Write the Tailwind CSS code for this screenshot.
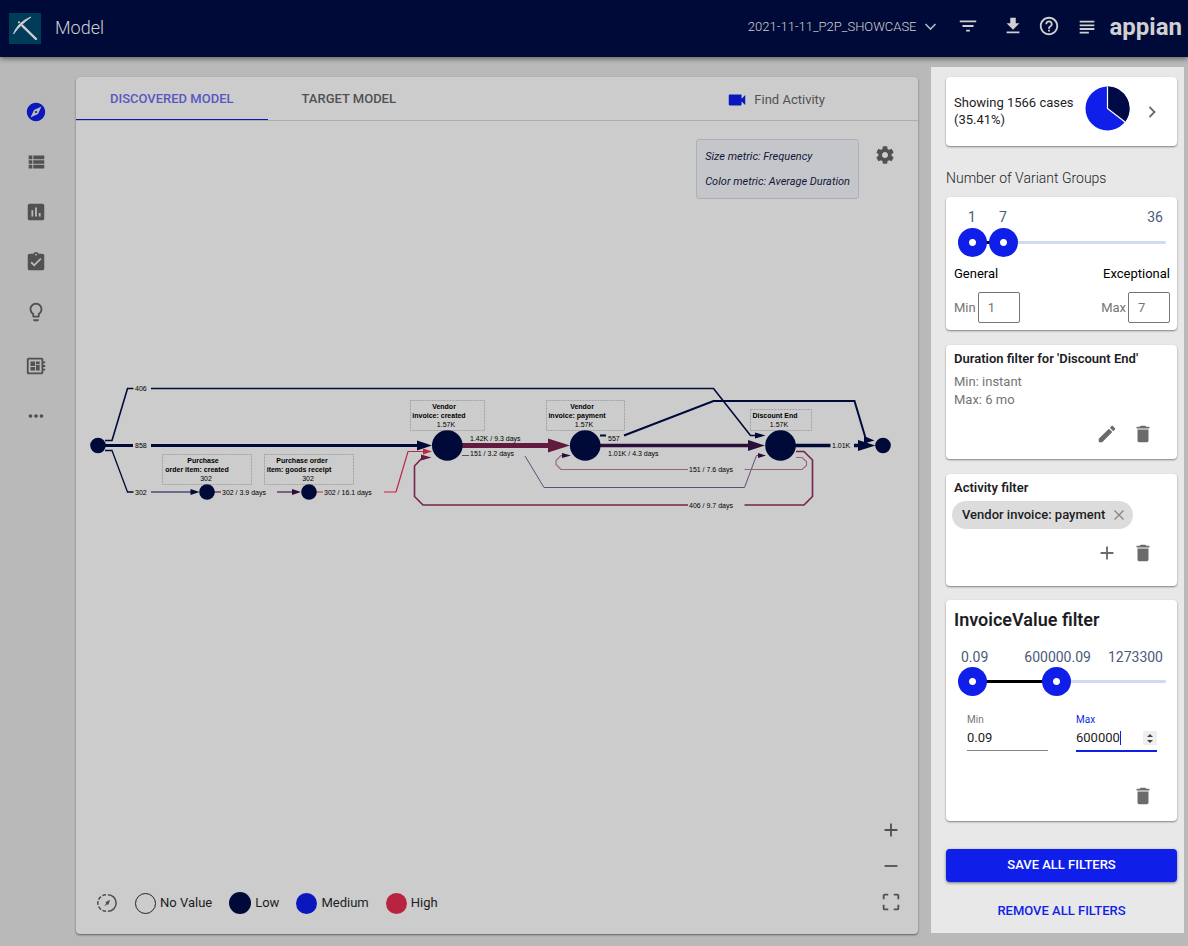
<!DOCTYPE html>
<html lang="en">
<head>
<meta charset="utf-8">
<meta name="viewport" content="width=device-width, initial-scale=1">
<title>Model</title>
<script src="https://cdn.jsdelivr.net/npm/@tailwindcss/browser@4"></script>
</head>
<body class="flex min-h-screen flex-col bg-[#b9b9b9] font-[Roboto,sans-serif] text-[13px] leading-4 text-[#1d1d1f]">

<svg class="hidden" aria-hidden="true">
  <symbol id="trash" viewBox="0 0 24 24"><path fill="currentColor" d="M6 19c0 1.1.9 2 2 2h8c1.1 0 2-.9 2-2V7H6v12zM19 4h-3.500l-1-1h-5l-1 1H5v2h14V4z"/></symbol>
  <symbol id="plus" viewBox="0 0 24 24"><path fill="currentColor" d="M19 13h-6v6h-2v-6H5v-2h6V5h2v6h6v2z"/></symbol>
</svg>

<header class="relative z-10 flex h-[57px] shrink-0 items-center bg-[#000a38] pr-[6px] pl-[9px] text-[#d0d0d3] shadow-[0_2px_5px_rgba(0,0,0,0.45)]">
  <svg class="h-[31px] w-8" viewBox="0 0 32 31" aria-hidden="true">
    <rect width="32" height="31" fill="#003c58"/>
    <path d="M4.500 21C7 13.500 13 7.500 22 4c-6 4.500-12 9.500-17.500 17z" fill="#d0d0d3" stroke="#d0d0d3" stroke-width=".8" stroke-linejoin="round"/>
    <path d="M13.500 12.800 27 26" stroke="#d0d0d3" stroke-width="2.400" stroke-linecap="round"/>
    <circle cx="10" cy="9.300" r="1.100" fill="#d0d0d3"/>
  </svg>
  <h1 class="ml-[14px] pb-[2px] text-lg font-light">Model</h1>
  <button class="ml-auto flex items-center gap-[7px] pb-1 font-light"><span>2021-11-11_P2P_SHOWCASE</span>
    <svg class="h-[13px] w-[13px]" viewBox="0 0 13 13" fill="none" stroke="#a9bccb" stroke-width="1.600" aria-hidden="true"><path d="M1.500 4 6.500 9l5-5"/></svg>
  </button>
  <button class="ml-5 pb-[6px]" aria-label="Filter"><svg class="h-[22px] w-[22px]" viewBox="0 0 24 24" fill="currentColor"><path d="M10 18h4v-2h-4v2zM3 6v2h18V6H3zm3 7h12v-2H6v2z"/></svg></button>
  <button class="ml-[23px] pb-[6px]" aria-label="Download"><svg class="h-[22px] w-[22px]" viewBox="0 0 24 24" fill="currentColor"><path d="M19 9h-4V3H9v6H5l7 7 7-7zM5 18v2h14v-2H5z"/></svg></button>
  <button class="ml-[14px] pb-[6px]" aria-label="Help"><svg class="h-[22px] w-[22px]" viewBox="0 0 24 24" fill="currentColor"><path d="M11 18h2v-2h-2v2zm1-16C6.480 2 2 6.480 2 12s4.480 10 10 10 10-4.480 10-10S17.520 2 12 2zm0 18c-4.410 0-8-3.590-8-8s3.590-8 8-8 8 3.590 8 8-3.590 8-8 8zm0-14c-2.210 0-4 1.790-4 4h2c0-1.100.900-2 2-2s2 .900 2 2c0 2-3 1.750-3 5h2c0-2.250 3-2.500 3-5 0-2.210-1.790-4-4-4z"/></svg></button>
  <button class="ml-4 pb-1" aria-label="Notes"><svg class="h-[22px] w-[22px]" viewBox="0 0 24 24" fill="currentColor"><path d="M4 5.200h16v2H4zM4 9.200h16v2H4zM4 13.200h16v2H4zM4 17.200h10v2H4z"/></svg></button>
  <span class="ml-3 pb-1 text-2xl leading-8 font-bold">appian</span>
</header>

<div class="flex grow">
  <nav class="flex w-[76px] shrink-0 flex-col items-center pt-11 pr-1 text-[#515151]" aria-label="Main">
    <div class="flex flex-col gap-7">
      <a href="#" aria-label="Explore" class="text-[#0a17bd]"><svg class="h-[22px] w-[22px]" viewBox="0 0 24 24" fill="currentColor"><path d="M12 10.900c-.610 0-1.100.490-1.100 1.100s.490 1.100 1.100 1.100c.610 0 1.100-.490 1.100-1.100s-.490-1.100-1.100-1.100zM12 2C6.480 2 2 6.480 2 12s4.480 10 10 10 10-4.480 10-10S17.520 2 12 2zm2.190 12.190L6 18l3.810-8.190L18 6l-3.810 8.190z"/></svg></a>
      <a href="#" aria-label="Details"><svg class="h-[22px] w-[22px]" viewBox="0 0 24 24" fill="currentColor"><path d="M4 14h4v-4H4v4zm0 5h4v-4H4v4zM4 9h4V5H4v4zm5 5h12v-4H9v4zm0 5h12v-4H9v4zM9 5v4h12V5H9z"/></svg></a>
      <a href="#" aria-label="Charts"><svg class="h-[22px] w-[22px]" viewBox="0 0 24 24" fill="currentColor"><path d="M19 3H5c-1.100 0-2 .900-2 2v14c0 1.100.900 2 2 2h14c1.100 0 2-.900 2-2V5c0-1.100-.900-2-2-2zM9 17H7v-7h2v7zm4 0h-2V7h2v10zm4 0h-2v-4h2v4z"/></svg></a>
      <a href="#" aria-label="Conformance"><svg class="h-[22px] w-[22px]" viewBox="0 0 24 24" fill="currentColor"><path d="M19 3h-4.180C14.400 1.840 13.300 1 12 1c-1.300 0-2.400.840-2.820 2H5c-1.100 0-2 .900-2 2v14c0 1.100.900 2 2 2h14c1.100 0 2-.900 2-2V5c0-1.100-.900-2-2-2zm-7 0c.550 0 1 .450 1 1s-.450 1-1 1-1-.450-1-1 .450-1 1-1zm-2 14l-4-4 1.410-1.410L10 14.170l6.590-6.590L18 9l-8 8z"/></svg></a>
      <a href="#" aria-label="Insights"><svg class="h-[22px] w-[22px]" viewBox="0 0 24 24" fill="currentColor"><path d="M9 21c0 .550.450 1 1 1h4c.550 0 1-.450 1-1v-1H9v1zm3-19C8.140 2 5 5.140 5 9c0 2.380 1.190 4.470 3 5.740V17c0 .550.450 1 1 1h6c.550 0 1-.450 1-1v-2.260c1.810-1.270 3-3.360 3-5.740 0-3.860-3.140-7-7-7zm2.850 11.100l-.850.600V16h-4v-2.300l-.850-.600A4.997 4.997 0 0 1 7 9c0-2.760 2.240-5 5-5s5 2.240 5 5c0 1.630-.800 3.160-2.150 4.100z"/></svg></a>
    </div>
    <div class="mt-8 flex flex-col gap-7">
      <a href="#" aria-label="Dashboard"><svg class="h-[22px] w-[22px]" viewBox="0 0 24 24" fill="currentColor"><path d="M22 9V7h-2V5c0-1.100-.900-2-2-2H4c-1.100 0-2 .900-2 2v14c0 1.100.900 2 2 2h14c1.100 0 2-.900 2-2v-2h2v-2h-2v-2h2v-2h-2V9h2zm-4 10H4V5h14v14zM6 13h5v4H6zm6-6h4v3h-4zM6 7h5v5H6zm6 4h4v6h-4z"/></svg></a>
      <a href="#" aria-label="More"><svg class="h-[22px] w-[22px]" viewBox="0 0 24 24" fill="currentColor"><path d="M6 10c-1.100 0-2 .900-2 2s.900 2 2 2 2-.900 2-2-.900-2-2-2zm12 0c-1.100 0-2 .900-2 2s.900 2 2 2 2-.900 2-2-.900-2-2-2zm-6 0c-1.100 0-2 .900-2 2s.900 2 2 2 2-.900 2-2-.900-2-2-2z"/></svg></a>
    </div>
  </nav>

  <main class="mt-5 mr-[13px] mb-3 flex min-w-0 grow flex-col rounded bg-[#ccc] shadow-[0_1px_2px_rgba(0,0,0,0.5)]">
    <div class="flex h-11 shrink-0 border-b border-[#adadad] text-[#515151]">
      <button class="border-b border-[#0a17bd] px-[34px] pt-px font-medium text-[#5957c1]">DISCOVERED MODEL</button>
      <button class="border-b border-transparent px-[34px] pt-px font-medium">TARGET MODEL</button>
      <button class="mr-[93px] ml-auto flex items-center gap-[6px] pt-[2px]">
        <svg class="h-[22px] w-[22px] text-[#0a17bd]" viewBox="0 0 24 24" fill="currentColor" aria-hidden="true"><path d="M17 10.500V7c0-.550-.450-1-1-1H4c-.550 0-1 .450-1 1v10c0 .550.450 1 1 1h12c.550 0 1-.450 1-1v-3.500l4 4v-11l-4 4z"/></svg>Find Activity
      </button>
    </div>
    <div class="flex items-start justify-end gap-[15px] pt-[18px] pr-[22px]">
      <div class="rounded-[3px] border border-[#adafb9] bg-[#c5c6c9] px-2 py-1 text-[11px] leading-[25px] text-[#10163b] italic">
        <p>Size metric: Frequency</p><p>Color metric: Average Duration</p>
      </div>
      <button class="mt-[5px] text-[#515151]" aria-label="Settings"><svg class="h-[22px] w-[22px]" viewBox="0 0 24 24" fill="currentColor"><path d="M19.140 12.940c.040-.300.060-.610.060-.940 0-.320-.020-.640-.070-.940l2.030-1.580c.180-.140.230-.410.120-.610l-1.920-3.320c-.120-.220-.370-.290-.590-.220l-2.390.960c-.500-.380-1.030-.700-1.620-.940l-.360-2.540c-.040-.240-.240-.410-.480-.410h-3.840c-.240 0-.430.170-.470.410l-.360 2.540c-.590.240-1.130.570-1.620.940l-2.390-.960c-.220-.080-.470 0-.590.220L2.740 8.870c-.120.210-.080.470.120.610l2.030 1.580c-.050.300-.090.630-.090.940s.020.640.070.940l-2.030 1.580c-.180.140-.230.410-.120.610l1.920 3.320c.120.220.370.290.590.220l2.390-.960c.500.380 1.030.700 1.620.940l.360 2.540c.050.240.240.410.480.410h3.840c.240 0 .440-.170.470-.410l.360-2.540c.590-.240 1.130-.560 1.620-.940l2.390.960c.220.080.470 0 .590-.220l1.920-3.320c.120-.220.070-.470-.120-.610l-2.010-1.580zM12 15.300c-1.820 0-3.300-1.480-3.300-3.300s1.480-3.300 3.300-3.300 3.300 1.480 3.300 3.300-1.480 3.300-3.300 3.300z"/></svg></button>
    </div>

    <svg class="mt-[171px] w-full font-['Liberation_Sans',Arial,sans-serif] text-[7px]" viewBox="76 370 842 150" role="img" aria-label="Process model">
      <g fill="none" stroke="#a2a2a2" stroke-dasharray="2 1">
        <path d="M162.500 454.500h89v30h-89zM264.500 454.500h89v30h-89zM410.500 400.500h74v30h-74zM546.500 400.500h78v30h-78zM750.500 409.500h61v21h-61z"/>
      </g>
      <g fill="none" stroke="#000a38">
        <path stroke-width="1.600" d="M105 440.500h7l15.500-52h6M151 388.500h562.500l37 47h6"/>
        <path stroke-width="3.200" d="M105 445.500h28M151 445.500h267"/>
        <path stroke-width="1.300" d="M105 450.500h7l15.500 41.500h6"/>
        <path stroke-width="1.300" stroke="#4b4d78" d="M151 492h40"/>
        <path stroke-width="2" d="M600 435.500h6M624 435.500l89.500-34.500h141l11.500 38.500"/>
        <path stroke-width="3.600" d="M795 445.500h35.500M854 445.500h6"/>
      </g>
      <g fill="none">
        <path stroke="#733354" stroke-width="1.400" d="M214 492h7"/>
        <path stroke="#59345c" stroke-width="1.400" d="M277 492h17"/>
        <path stroke="#cf5a6e" stroke-width="1.600" d="M316 492h7M384 492h12"/>
        <path stroke="#b82a45" stroke-width="1.200" d="M396 492l12-40.500h16"/>
        <path stroke="#621a3e" stroke-width="5" d="M462 445.500h88"/>
        <path stroke="#2b0e3a" stroke-width="3.600" d="M600 445.500h150"/>
        <path stroke="#5d4f78" stroke-width="1" d="M462 455.500h7M525 456l19 31.500h200.500l12-32h3"/>
        <path stroke="#98637f" stroke-width="1.100" d="M796 457.500h6l4.500 4v4l-4.500 4h-57.500M688 469.500H561l-5-5v-4l5-5h3"/>
        <path stroke="#74244a" stroke-width="1.600" d="M796 451.500h8l8.500 8.500v36.500l-8.500 8.500h-59.500M688 505H423l-8.500-8.500V466l8-8.500"/>
      </g>
      <g fill="#000a38">
        <path d="M417 440.500l15 5-15 5zM190.500 489l9 3-9 3zM755 432.500l10.500 3-10.500 3zM864 436l10.500 4.500-10.500 3zM858 440l17.500 5.500-17.500 5.500z"/>
        <path fill="#2b0e3a" d="M292 489l9 3-9 3zM748 440l17 5.500-17 5.500zM758 453l8 2.500-8 2.500zM562 453l9 2.500-9 2.500z"/>
        <path fill="#b82a45" d="M423 448.500l9 3-9 3z"/>
        <path fill="#621a3e" d="M548 438.500l22 7-22 7zM421 454.500l10.500 3-10.500 3z"/>
        <circle cx="98" cy="445.500" r="7.800"/><circle cx="207" cy="492" r="7.800"/><circle cx="309" cy="492" r="7.800"/>
        <circle cx="447.300" cy="445.500" r="15.300"/><circle cx="585.200" cy="445.500" r="15.300"/><circle cx="780.500" cy="445.500" r="15.300"/><circle cx="883" cy="445.500" r="7.800"/>
      </g>
      <g fill="#000">
        <text x="135" y="391">406</text><text x="135" y="448">858</text><text x="135" y="495">302</text>
        <text x="222" y="495">302 / 3.9 days</text><text x="324" y="495">302 / 16.1 days</text>
        <text x="470" y="441">1.42K / 9.3 days</text><text x="470" y="456">151 / 3.2 days</text>
        <text x="608" y="441">557</text><text x="608" y="456">1.01K / 4.3 days</text>
        <text x="689" y="472">151 / 7.6 days</text><text x="689" y="508">406 / 9.7 days</text><text x="832" y="448">1.01K</text>
      </g>
      <g fill="#000" text-anchor="middle">
        <g class="font-bold">
          <text x="203" y="463">Purchase</text><text x="197" y="472">order item: created</text>
          <text x="302" y="463">Purchase order</text><text x="299" y="472">item: goods receipt</text>
          <text x="444" y="409">Vendor</text><text x="439" y="418">invoice: created</text>
          <text x="582" y="409">Vendor</text><text x="577" y="418">invoice: payment</text>
          <text x="775" y="418">Discount End</text>
        </g>
        <text x="206" y="481">302</text><text x="308" y="481">302</text>
        <text x="446" y="427">1.57K</text><text x="584" y="427">1.57K</text><text x="779" y="427">1.57K</text>
      </g>
    </svg>

    <div class="mt-auto flex items-end justify-between pr-4 pb-[21px] pl-5">
      <div class="flex h-5 items-center gap-[17px]">
        <button class="text-[#515151]" aria-label="Animate"><svg class="h-[22px] w-[22px]" viewBox="0 0 24 24" fill="none" stroke="currentColor" stroke-width="1.700"><path d="M13 3a9 9 0 0 1 0 18"/><path d="M11 3a9 9 0 0 0 0 18" stroke-dasharray="4.200 1.800"/><path d="M15.500 8.500l-2 5.500-1.500-.5-3 2 2-3-.5-1.500z" fill="currentColor" stroke="none"/></svg></button>
        <span class="flex items-center gap-1"><i class="h-[21px] w-[21px] rounded-full border border-[#222]"></i>No Value</span>
        <span class="flex items-center gap-1"><i class="h-[22px] w-[22px] rounded-full bg-[#000a38]"></i>Low</span>
        <span class="flex items-center gap-1"><i class="h-[21px] w-[21px] rounded-full bg-[#0a17bd]"></i>Medium</span>
        <span class="flex items-center gap-1"><i class="h-[21px] w-[21px] rounded-full bg-[#b82340]"></i>High</span>
      </div>
      <div class="flex flex-col gap-[14px] text-[#515151]">
        <button aria-label="Zoom in"><svg class="h-[22px] w-[22px]"><use href="#plus"/></svg></button>
        <button aria-label="Zoom out"><svg class="h-[22px] w-[22px]" viewBox="0 0 24 24"><path fill="currentColor" d="M5 11h14v2H5z"/></svg></button>
        <button aria-label="Fit to screen"><svg class="h-[22px] w-[22px]" viewBox="0 0 24 24" fill="none" stroke="currentColor" stroke-width="2"><path d="M4 9V5a1 1 0 0 1 1-1h4M15 4h4a1 1 0 0 1 1 1v4M20 15v4a1 1 0 0 1-1 1h-4M9 20H5a1 1 0 0 1-1-1v-4"/></svg></button>
      </div>
    </div>
  </main>

  <aside class="mt-[10px] mr-1 mb-[13px] flex w-[253px] shrink-0 flex-col bg-[#e8e8e8] pt-[10px] pr-[7px] pl-[15px]">
    <section class="flex h-[69px] items-center rounded bg-white pr-4 pl-2 shadow-[0_1px_2px_rgba(0,0,0,0.45)]">
      <p class="w-[131px] pb-[2px] leading-[17px]">Showing 1566 cases (35.41%)</p>
      <svg class="mb-[6px] h-[45px] w-[45px]" viewBox="-22.500 -22.500 45 45" aria-hidden="true"><circle r="22" fill="#0f1fe9"/><path d="M0 0V-22A22 22 0 0 1 17.500 13.400z" fill="#000a45"/><path d="M0-22V0L17.500 13.400" fill="none" stroke="#fff" stroke-width="1.200"/></svg>
      <button class="ml-auto text-[#6b6b6b]" aria-label="Show details"><svg class="h-[18px] w-[18px]" viewBox="0 0 18 18" fill="none" stroke="currentColor" stroke-width="1.800"><path d="M6.500 4 11.500 9l-5 5"/></svg></button>
    </section>

    <h2 class="mt-6 mb-[11px] text-sm leading-4 font-light">Number of Variant Groups</h2>
    <section class="h-[133px] rounded bg-white pt-3 pr-[7px] pl-2 shadow-[0_1px_2px_rgba(0,0,0,0.45)]">
      <div class="flex pr-[7px] pl-[14px] text-sm leading-4 text-[#4b5a7a]"><span>1</span><span class="ml-[23px]">7</span><span class="ml-auto">36</span></div>
      <div class="relative mr-1 ml-1 flex h-[35px] items-center">
        <div class="flex h-[3px] w-full rounded-sm bg-[#d0dbf0] pl-[14px]"><div class="bg-black" style="width:17.1%"></div></div>
        <input type="range" aria-label="Minimum variant groups" min="1" max="36" value="1" class="pointer-events-none absolute inset-0 w-full appearance-none bg-transparent [&::-webkit-slider-thumb]:pointer-events-auto [&::-webkit-slider-thumb]:h-[29px] [&::-webkit-slider-thumb]:w-[29px] [&::-webkit-slider-thumb]:appearance-none [&::-webkit-slider-thumb]:rounded-full [&::-webkit-slider-thumb]:bg-[radial-gradient(circle,#fff_3px,#0f1fe9_4px)]">
        <input type="range" aria-label="Maximum variant groups" min="1" max="36" value="7" class="pointer-events-none absolute inset-0 w-full appearance-none bg-transparent [&::-webkit-slider-thumb]:pointer-events-auto [&::-webkit-slider-thumb]:h-[29px] [&::-webkit-slider-thumb]:w-[29px] [&::-webkit-slider-thumb]:appearance-none [&::-webkit-slider-thumb]:rounded-full [&::-webkit-slider-thumb]:bg-[radial-gradient(circle,#fff_3px,#0f1fe9_4px)]">
      </div>
      <div class="mt-[6px] flex justify-between text-black"><span>General</span><span>Exceptional</span></div>
      <div class="mt-[10px] flex justify-between text-[#757575]">
        <label class="flex items-center gap-[2px]">Min <input type="text" inputmode="numeric" value="1" class="h-[31px] w-[42px] rounded-xs border border-[#757575] px-[9px]"></label>
        <label class="flex items-center gap-[2px]">Max <input type="text" inputmode="numeric" value="7" class="h-[31px] w-[42px] rounded-xs border border-[#757575] px-[9px]"></label>
      </div>
    </section>

    <section class="mt-[15px] flex h-[114px] flex-col rounded bg-white px-2 pt-[6px] shadow-[0_1px_2px_rgba(0,0,0,0.45)]">
      <h3 class="font-semibold">Duration filter for 'Discount End'</h3>
      <p class="mt-[6px] leading-[18px] text-[#757575]">Min: instant<br>Max: 6 mo</p>
      <div class="mt-auto mr-[15px] mb-[14px] flex justify-end gap-[14px] text-[#6b6b6b]">
        <button aria-label="Edit duration filter"><svg class="h-[22px] w-[22px]" viewBox="0 0 24 24" fill="currentColor"><path d="M3 17.250V21h3.750L17.810 9.940l-3.750-3.750L3 17.250zM20.710 7.040c.390-.390.390-1.020 0-1.410l-2.340-2.340c-.390-.390-1.020-.390-1.410 0l-1.830 1.830 3.750 3.750 1.830-1.830z"/></svg></button>
        <button aria-label="Delete duration filter"><svg class="h-[22px] w-[22px]"><use href="#trash"/></svg></button>
      </div>
    </section>

    <section class="mt-[15px] flex h-[112px] flex-col rounded bg-white px-[6px] pt-[6px] shadow-[0_1px_2px_rgba(0,0,0,0.45)]">
      <h3 class="ml-[2px] font-semibold">Activity filter</h3>
      <div class="mt-[5px] flex h-7 items-center gap-2 self-start rounded-full bg-[#dcdcdc] pr-2 pl-[10px] font-medium">Vendor invoice: payment
        <button class="text-[#858585]" aria-label="Remove Vendor invoice: payment"><svg class="h-3 w-3" viewBox="0 0 12 12" fill="none" stroke="currentColor" stroke-width="1.300"><path d="M1.500 1.500l9 9M10.500 1.500l-9 9"/></svg></button>
      </div>
      <div class="mt-[13px] mr-[17px] flex justify-end gap-[14px] text-[#6b6b6b]">
        <button aria-label="Add activity"><svg class="h-[22px] w-[22px]"><use href="#plus"/></svg></button>
        <button aria-label="Delete activity filter"><svg class="h-[22px] w-[22px]"><use href="#trash"/></svg></button>
      </div>
    </section>

    <section class="mt-[14px] flex h-[221px] flex-col rounded bg-white px-2 pt-2 shadow-[0_1px_2px_rgba(0,0,0,0.45)]">
      <h3 class="text-lg leading-6 font-semibold">InvoiceValue filter</h3>
      <div class="mt-[17px] flex justify-between pr-[6px] pl-[7px] text-sm leading-4 text-[#4b5a7a]"><span>0.09</span><span class="ml-[19px]">600000.09</span><span>1273300</span></div>
      <div class="relative mr-[3px] ml-1 flex h-[33px] items-center">
        <div class="flex h-[3px] w-full rounded-sm bg-[#d0dbf0] pl-[14px]"><div class="bg-black" style="width:43.5%"></div></div>
        <input type="range" aria-label="Minimum invoice value" min="0" max="1273300" value="0" class="pointer-events-none absolute inset-0 w-full appearance-none bg-transparent [&::-webkit-slider-thumb]:pointer-events-auto [&::-webkit-slider-thumb]:h-[29px] [&::-webkit-slider-thumb]:w-[29px] [&::-webkit-slider-thumb]:appearance-none [&::-webkit-slider-thumb]:rounded-full [&::-webkit-slider-thumb]:bg-[radial-gradient(circle,#fff_3px,#0f1fe9_4px)]">
        <input type="range" aria-label="Maximum invoice value" min="0" max="1273300" value="600000" class="pointer-events-none absolute inset-0 w-full appearance-none bg-transparent [&::-webkit-slider-thumb]:pointer-events-auto [&::-webkit-slider-thumb]:h-[29px] [&::-webkit-slider-thumb]:w-[29px] [&::-webkit-slider-thumb]:appearance-none [&::-webkit-slider-thumb]:rounded-full [&::-webkit-slider-thumb]:bg-[radial-gradient(circle,#fff_3px,#0f1fe9_4px)]">
      </div>
      <div class="mt-4 mr-3 ml-[13px] grid grid-cols-2 items-start gap-7">
        <div>
          <label for="vmin" class="block text-[10px] leading-3 text-[#757575]">Min</label>
          <div class="flex h-[25px] items-center border-b border-[#858585]"><input id="vmin" type="text" inputmode="decimal" value="0.09" class="w-full"></div>
        </div>
        <div>
          <label for="vmax" class="block text-[10px] leading-3 text-[#0f1fe9]">Max</label>
          <div class="flex h-[26px] items-center border-b-2 border-[#0f1fe9]">
            <input id="vmax" type="text" inputmode="decimal" value="600000" class="w-11 outline-none"><span class="h-[14px] w-px bg-[#0f1fe9]"></span>
            <span class="ml-auto flex h-[14px] w-[14px] flex-col items-center justify-center gap-[3px] bg-[#efefef]">
              <button aria-label="Increase"><svg class="block h-[3px] w-[6px]" viewBox="0 0 6 3"><path fill="#444" d="M0 3 3 0l3 3z"/></svg></button>
              <button aria-label="Decrease"><svg class="block h-[3px] w-[6px]" viewBox="0 0 6 3"><path fill="#444" d="M0 0l3 3 3-3z"/></svg></button>
            </span>
          </div>
        </div>
      </div>
      <button class="mt-auto mr-[15px] mb-[14px] self-end text-[#6b6b6b]" aria-label="Delete InvoiceValue filter"><svg class="h-[22px] w-[22px]"><use href="#trash"/></svg></button>
    </section>

    <button class="mt-7 h-[33px] shrink-0 rounded bg-[#0f1fe9] pb-[2px] text-center font-medium text-white shadow-[0_1px_3px_rgba(0,0,0,0.5)]">SAVE ALL FILTERS</button>
    <button class="mt-3 h-[33px] shrink-0 text-center font-medium text-[#0f1fe9]">REMOVE ALL FILTERS</button>
  </aside>
</div>
</body>
</html>
